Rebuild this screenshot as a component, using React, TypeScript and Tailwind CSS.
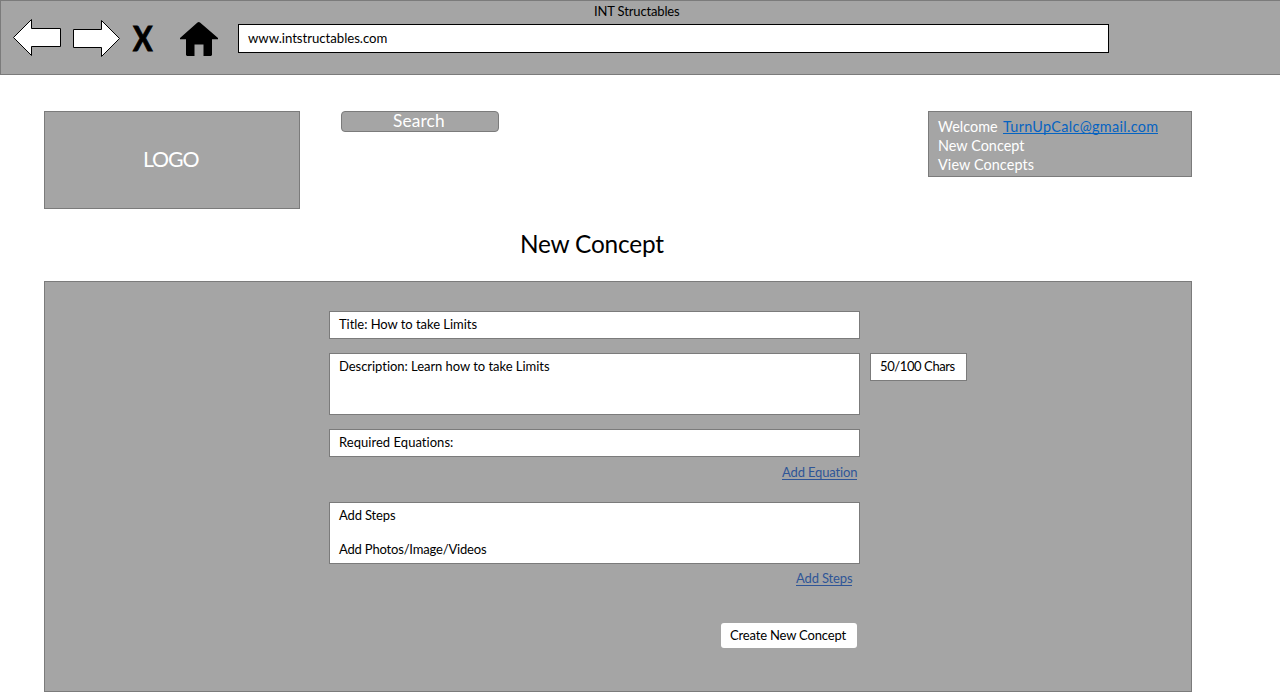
function BrowserBar() {
  return (
    <header className="flex h-[75px] items-start border border-r-0 border-[#7b7b7b] bg-[#a5a5a5]">
      <svg className="-mt-px -ml-px h-[75px] w-[238px] shrink-0" viewBox="0 0 238 75">
        <g fill="#fff" stroke="#000" strokeWidth="1">
          <path d="M13.5 37.5 31.5 19.5V28.5H60.5V46.5H31.5V55.5Z" />
          <path d="M119.5 38.5 101.5 20.5V29.5H73.5V47.5H101.5V56.5Z" />
        </g>
        <text x="133" y="51" fontFamily="Lato, sans-serif" fontWeight="700" fontSize="33.5" textLength="19.5" lengthAdjust="spacingAndGlyphs" stroke="#000" strokeWidth="1">X</text>
        <path d="M180 39.3V38L197.5 22.5Q198.8 21.5 200 22.5L218 38V39.3H212V55L211 56H203.5V44.5H194.5V56H187L186 55V39.3Z" />
      </svg>
      <div className="w-[871px]">
        <div className="h-[23px] pl-[356px] text-[13px] leading-[20px] tracking-[-0.15px]">INT Structables</div>
        <div className="h-[29px] border border-black bg-white pl-[9px] text-[13.2px] leading-[26px] tracking-[-0.03px]">
          www.intstructables.com
        </div>
      </div>
    </header>
  );
}

const field = "border border-[#7b7b7b] bg-white pl-[9px] text-[13px] leading-[25px] tracking-[-0.04px]";
const link = "h-[15px] w-fit border-b border-[#2f5597] text-[13px] leading-[15px] tracking-[-0.15px] text-[#2f5597]";

export default function App() {
  return (
    <div className="h-[692px] w-[1280px] overflow-hidden bg-white font-[Lato,sans-serif] whitespace-nowrap text-black [font-variant-ligatures:none]">
      <BrowserBar />
      <div className="flex h-[134px] items-start pt-9 pl-11">
        <div className="h-[98px] w-[256px] border border-[#7b7b7b] bg-[#a5a5a5] pl-[98px] text-[21.3px] leading-[95px] tracking-[-1.1px] text-white">
          LOGO
        </div>
        <div className="ml-[41px] h-[21px] w-[158px] rounded border border-[#7b7b7b] bg-[#a5a5a5] pl-[51px] text-[17.3px] leading-[18px] tracking-[0.15px] text-white">
          Search
        </div>
        <div className="ml-[429px] h-[66px] w-[264px] border border-[#7b7b7b] bg-[#a5a5a5] pt-[5px] pl-[9px] text-[14.4px] leading-[19px] tracking-[0.04px] text-white">
          <div className="flex h-[19px]">
            <span className="w-[65px]">Welcome</span>
            <span className="h-[17px] border-b border-[#0563c1] tracking-[0.32px] text-[#0563c1]">TurnUpCalc@gmail.com</span>
          </div>
          <div>New Concept</div>
          <div className="tracking-[0.1px]">View Concepts</div>
        </div>
      </div>
      <h1 className="h-[72px] pt-[19px] pl-[520px] text-[24.4px] leading-[32px] tracking-[-0.2px]">New Concept</h1>
      <main className="ml-11 h-[411px] w-[1148px] border border-[#7b7b7b] bg-[#a5a5a5] pt-[29px] pl-[284px]">
        <div className={`${field} h-[28px] w-[531px]`}>Title: How to take Limits</div>
        <div className="mt-[14px] flex items-start gap-[10px]">
          <div className={`${field} h-[62px] w-[531px]`}>Description: Learn how to take Limits</div>
          <div className={`${field} h-[28px] w-[97px]`}><span className="tracking-[-0.4px]">50/100 Chars</span></div>
        </div>
        <div className={`${field} mt-[14px] h-[28px] w-[531px]`}><span className="tracking-[0.04px]">Required Equations:</span></div>
        <div className="h-[45px] pt-[8px] pl-[453px]"><div className={link}>Add Equation</div></div>
        <div className={`${field} h-[62px] w-[531px]`}>
          <div className="h-[34px]"><span className="tracking-[-0.15px]">Add Steps</span></div>
          <div><span className="tracking-[-0.18px]">Add Photos/Image/Videos</span></div>
        </div>
        <div className="h-[59px] pt-[7px] pl-[467px]"><div className={link}>Add Steps</div></div>
        <button className="ml-[392px] block h-[25px] w-[136px] rounded-[3px] bg-white pl-[9px] text-left text-[13px] leading-[25px] tracking-[-0.17px]">
          Create New Concept
        </button>
      </main>
    </div>
  );
}
